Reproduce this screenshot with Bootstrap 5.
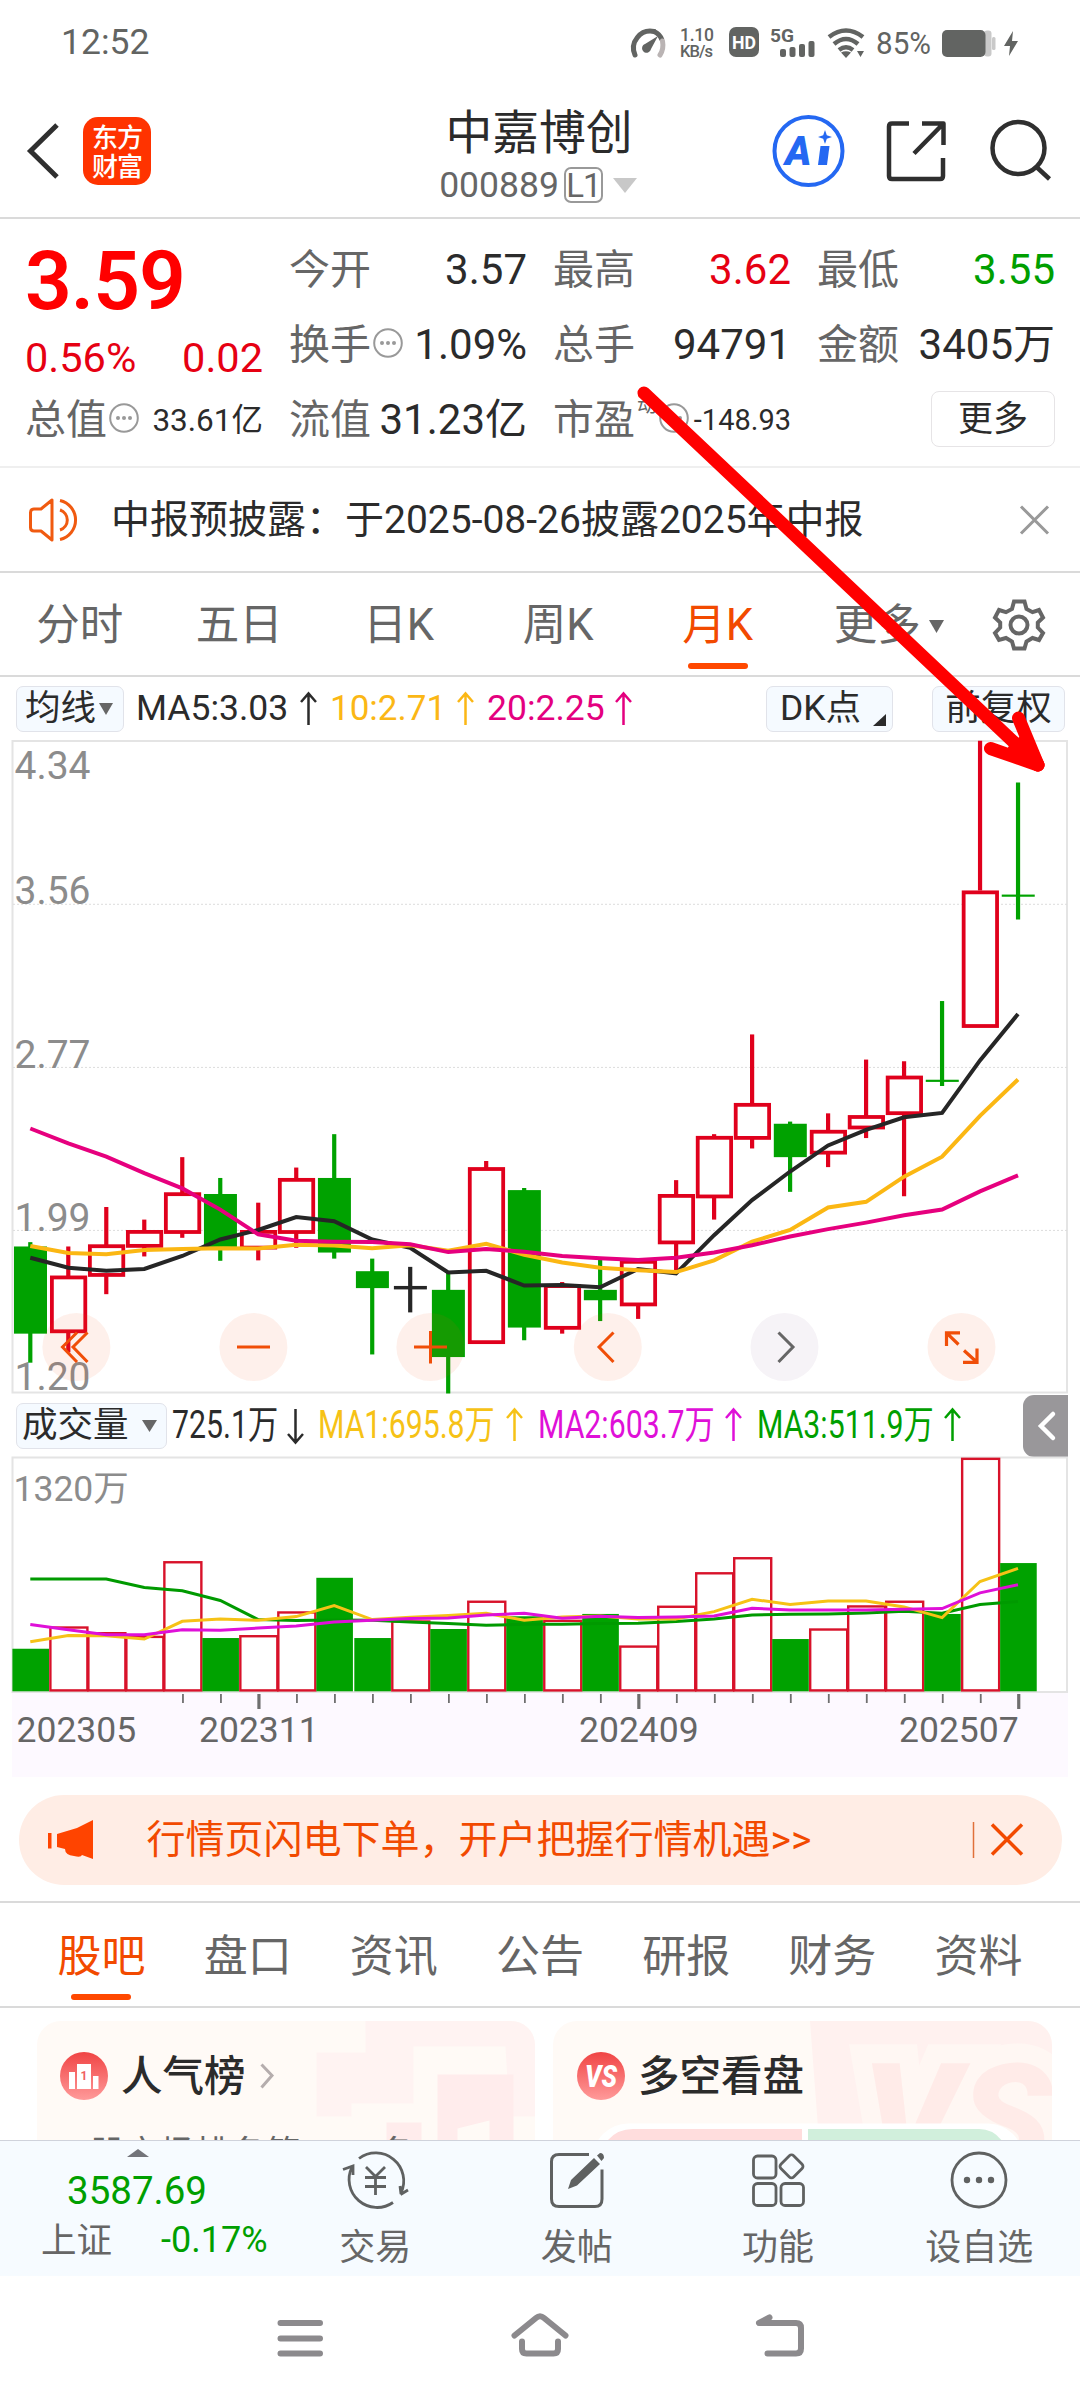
<!DOCTYPE html>
<html lang="zh-CN">
<head>
<meta charset="utf-8">
<meta name="viewport" content="width=device-width, initial-scale=1">
<title>中嘉博创 000889</title>
<link href="https://cdn.jsdelivr.net/npm/bootstrap@5.3.0/dist/css/bootstrap.min.css" rel="stylesheet">
<style>
  body{width:1080px;height:2400px;overflow:hidden;background:#fff;color:#2b2b2b;font-family:Roboto,"Noto Sans CJK SC",sans-serif;line-height:1.2}
  svg{display:block;flex:none;overflow:visible}
  .page{width:1080px;height:2400px;overflow:hidden}
  .gray{color:#666}
  .up{color:#e60012}
  .down{color:#009f00}
  .hot{color:#f24a00}
  .rule{border-bottom:2px solid #dadada}
  .bar-status{height:85px;color:#626462;padding:0 61px 0 61px}
  .bar-title{height:134px;padding-left:27px}
  .logo{width:68px;height:68px;border-radius:15px;background:#ff3300;color:#fff;font-size:26px;line-height:29px;font-weight:500;letter-spacing:-1px;font-family:"Noto Sans CJK SC",sans-serif;padding-top:4px}
  .lvl{border:2px solid #999;border-radius:7px;width:39px;height:36px;font-size:33px;line-height:33px;letter-spacing:-1px}
  .quote{height:249px;padding:14px 25px 0;display:grid;grid-template-columns:repeat(4,238px);column-gap:26px;grid-template-rows:repeat(3,75px)}
  .quote>div{display:flex;align-items:center;justify-content:space-between;white-space:nowrap;font-size:42px}
  .lab{color:#666;font-size:41px;display:flex;align-items:center}
  .quote>.last{color:#f00;font-size:82px;font-weight:600;letter-spacing:-1px;line-height:75px;padding-top:22px}
  .btn-more{width:124px;height:56px;border:1.5px solid #e6e4e6;border-radius:8px;font-size:35px;padding:0;line-height:49px;color:#2b2b2b}
  .notice{height:105px;font-size:39px;padding:0 31px 0 29px}
  .tabs-k{height:104px;font-size:43.5px;color:#666}
  .tabs-k>span{width:159.5px;height:100%;padding-top:5px}
  .uline::after{content:"";position:absolute;left:50%;margin-left:-30px;width:60px;height:6px;border-radius:3px;background:#ff4800;bottom:6px}
  .legend{height:62px;font-size:36px;padding:0 15px 0 16px;white-space:nowrap}
  .chip{height:46px;background:#f5faff;border:1.5px solid #e1e3ea;border-radius:7px;font-size:35.5px;line-height:43px}
  .tight{display:inline-block;transform:scaleX(.775);transform-origin:0 50%;font-size:39px}
  .fold{width:45px;height:62px;background:#99979a;border-radius:11px 0 0 11px}
  .promo{height:90px;margin:15px 18px 0 18.5px;background:#ffede5;border-radius:45px;font-size:39px;padding:0 38px 0 29px;color:#f24a00}
  .tabs-b{height:105px;font-size:44px;color:#666;padding:0 28.4px}
  .tabs-b>span{width:146.2px;height:100%;padding-top:5px}
  .deck{height:132px;padding:12.5px 28px 0 36.5px;gap:18.5px;overflow:hidden}
  .tile{height:160px;border-radius:24px 24px 0 0;overflow:hidden;background:#fffaf6}
  .tile h3{font-size:41.5px;font-weight:500;margin:0;color:#2b2b2b}
  .tabbar{height:136px;background:#f6fbff;border-top:1.5px solid #d0d3dc;color:#666}
  .tabbar .it{width:201.3px;font-size:36px;padding-top:8px}
  .ann{position:absolute;left:0;top:0;pointer-events:none}
</style>
<script src="https://cdn.jsdelivr.net/npm/bootstrap@5.3.0/dist/js/bootstrap.bundle.min.js"></script>
</head>
<body>
<div class="page position-relative d-flex flex-column">

  <!-- status bar -->
  <div class="bar-status d-flex align-items-center justify-content-between flex-shrink-0">
    <span style="font-size:35.500px">12:52</span>
    <svg width="390" height="36" viewBox="630 25 390 36" fill="#626462" font-family="Roboto">
      <path d="M636 55A17 17 0 0 1 655 31.5" fill="none" stroke="#626462" stroke-width="5" stroke-linecap="round"/>
      <path d="M655 31.5Q661 34 663 40" fill="none" stroke="#626462" stroke-width="5"/>
      <path d="M663.5 41Q665 49 661 55" fill="none" stroke="#bab4b4" stroke-width="5" stroke-linecap="round"/>
      <path d="M659 36L652 49a4.500 4.500 0 1 1-6-5Z"/>
      <text x="681" y="41" font-size="17.500" font-weight="500" textLength="34">1.10</text>
      <text x="681" y="56.500" font-size="16.500" font-weight="500" textLength="33">KB/s</text>
      <rect x="730" y="27" width="30" height="30" rx="7"/>
      <text x="733" y="49" font-size="18.500" font-weight="700" fill="#fff" textLength="24" lengthAdjust="spacingAndGlyphs">HD</text>
      <text x="771" y="41.500" font-size="19" font-weight="700" textLength="24" lengthAdjust="spacingAndGlyphs">5G</text>
      <rect x="781" y="49" width="6" height="8" rx="2"/><rect x="790.500" y="47" width="6" height="10" rx="2"/><rect x="800" y="44" width="6" height="13" rx="2"/><rect x="809.500" y="41" width="6" height="16" rx="2"/>
      <g fill="none" stroke="#626462" stroke-width="4.500"><path d="M830 37Q847 24 864 37"/><path d="M835 44Q847 34 859 44"/><path d="M840 50Q847 44.500 854 50"/></g>
      <path d="M842 52.500Q847 50 852 52.500L847 58ZM858 51h7l-3.500 6z"/>
      <text x="877" y="53.500" font-size="31" textLength="55" lengthAdjust="spacingAndGlyphs">85%</text>
      <rect x="985" y="30.500" width="7.500" height="26" rx="3" fill="#c9c9c9"/><rect x="993" y="37" width="3.500" height="13" rx="1.500" fill="#c9c9c9"/>
      <rect x="943" y="30" width="43.500" height="27" rx="5"/>
      <path d="M1014 31L1005 46h6l-1 10 9-15h-6z"/>
    </svg>
  </div>

  <!-- title bar -->
  <div class="bar-title rule d-flex align-items-center flex-shrink-0">
    <svg width="33" height="60" viewBox="0 0 33 60"><path d="M30 4L3.500 30 30 56" fill="none" stroke="#2f2f2f" stroke-width="5"/></svg>
    <div class="logo text-center" style="margin-left:23px"><div>东方</div><div>财富</div></div>
    <div class="flex-grow-1 d-flex flex-column align-items-center" style="margin-left:157px;padding-top:10px">
      <div style="font-size:46.800px;line-height:58px">中嘉博创</div>
      <div class="d-flex align-items-center gray" style="font-size:35.500px;line-height:47px;margin-left:-2px">000889<span class="lvl text-center" style="margin:0 10px 0 5px">L1</span><svg width="24" height="15"><path d="M0 0h24L12 15z" fill="#c8c8c8"/></svg></div>
    </div>
    <svg width="310" height="80" viewBox="770 112 310 80" fill="none" stroke="#2f2f2f" stroke-width="4.500">
      <circle cx="808.500" cy="152" r="34" stroke="#2468f2" stroke-width="4"/>
      <text x="785" y="166" font-size="40" font-weight="900" font-family="Roboto" fill="#2468f2" stroke="none" font-style="italic">A</text>
      <path d="M820.500 147h9l-2.500 19h-9z" fill="#2468f2" stroke="none"/>
      <path d="M825 131l1.800 5.200 5.200 1.800-5.200 1.800-1.800 5.200-1.800-5.200-5.200-1.800 5.200-1.800z" fill="#2468f2" stroke="none"/>
      <path d="M909 124.500H892q-3 0-3 3V177q0 3 3 3h48q3 0 3-3V159M914 154.500L942 126M922 124.500h21.500V146" stroke-linejoin="round"/>
      <circle cx="1018.500" cy="149" r="26"/><path d="M1036.500 168l13 12"/>
    </svg>
  </div>

  <!-- quote grid -->
  <div class="quote flex-shrink-0 rule" style="border-color:#efefef">
    <div class="last">3.59</div>
    <div><span class="lab">今开</span><span>3.57</span></div>
    <div><span class="lab">最高</span><span class="up">3.62</span></div>
    <div><span class="lab">最低</span><span class="down">3.55</span></div>

    <div class="up" style="padding-top:25px;font-size:41.500px"><span>0.56%</span><span>0.02</span></div>
    <div><span class="lab">换手<svg width="32" height="34"><use href="#dots"/></svg></span><span>1.09%</span></div>
    <div><span class="lab">总手</span><span>94791</span></div>
    <div><span class="lab">金额</span><span>3405万</span></div>

    <div><span class="lab">总值<svg width="32" height="34"><use href="#dots"/></svg></span><span style="font-size:31.500px">33.61亿</span></div>
    <div><span class="lab">流值</span><span>31.23亿</span></div>
    <div><span class="lab">市盈<span style="font-size:20px;align-self:flex-start;width:22px;margin-top:-3px;padding-left:2px">动</span><svg width="32" height="34"><use href="#dots"/></svg></span><span style="font-size:29px">-148.93</span></div>
    <div style="justify-content:flex-end"><button class="btn btn-more" style="margin-top:-3px">更多</button></div>
  </div>

  <!-- notice -->
  <div class="notice rule d-flex align-items-center flex-shrink-0">
    <svg width="52" height="46" viewBox="0 0 52 46" fill="none" stroke="#f05a10" stroke-width="3"><path d="M23 3v40L12 34H5q-3.500 0-3.500-3.500v-15Q1.500 12 5 12h7Z" stroke-linejoin="round"/><path d="M31 13a10.500 10.500 0 0 1 0 20M31 3.500a20 20 0 0 1 0 39"/></svg>
    <span class="flex-grow-1" style="margin-left:30px;padding-top:1px">中报预披露：于2025-08-26披露2025年中报</span>
    <svg width="29" height="28"><path d="M1 0.500L28 27.500M28 0.500L1 27.500" stroke="#999" stroke-width="3"/></svg>
  </div>

  <!-- period tabs -->
  <div class="tabs-k rule d-flex align-items-center flex-shrink-0">
    <span class="d-flex align-items-center justify-content-center">分时</span>
    <span class="d-flex align-items-center justify-content-center">五日</span>
    <span class="d-flex align-items-center justify-content-center">日K</span>
    <span class="d-flex align-items-center justify-content-center">周K</span>
    <span class="d-flex align-items-center justify-content-center hot position-relative uline">月K</span>
    <span class="d-flex align-items-center justify-content-center" style="padding-left:23px">更多<svg width="15" height="13" style="margin-left:8px"><path d="M0 0h15L7.500 13z" fill="#666"/></svg></span>
    <svg class="mx-auto" width="54" height="54" viewBox="-27 -28 54 54" fill="none" stroke="#666" stroke-width="4"><circle r="8.500"/><path d="M-5 -23.500H5.500L7.500 -16 13.500 -12.800 20 -15 24 -7.500 18.800 -2.500V2.500L24 8 20 15 13.500 13 7.500 16.500 5.500 23.500H-5L-7 16.500 -13 13 -20 15 -24 8 -18.800 2.500V-2.500L-24 -7.500 -20 -15 -13 -12.800 -7 -16Z"/></svg>
  </div>

  <!-- moving-average legend -->
  <div class="legend d-flex align-items-center flex-shrink-0" style="padding-top:1px">
    <span class="chip d-flex align-items-center" style="width:108px;padding-left:8px">均线<svg width="14" height="12" style="margin-left:3px"><path d="M0 0h14L7 12z" fill="#666"/></svg></span>
    <span style="width:164px;margin-left:12px;font-size:35.500px">MA5:3.03</span><svg width="17" height="33" stroke="#2b2b2b"><use href="#au"/></svg>
    <span style="width:127px;margin-left:13px;font-size:35px;color:#fbb715">10:2.71</span><svg width="17" height="33" stroke="#fbb715"><use href="#au"/></svg>
    <span style="width:128px;margin-left:13px;font-size:35.500px;color:#e4007f">20:2.25</span><svg width="17" height="33" stroke="#e4007f"><use href="#au"/></svg>
    <span class="chip ms-auto position-relative" style="width:127px;padding-left:13px">DK点<svg class="position-absolute" style="right:6px;bottom:5px" width="13" height="12"><path d="M13 0v12H0z" fill="#2b2b2b"/></svg></span>
    <span class="chip text-center" style="width:133px;margin-left:39px">前复权</span>
  </div>

  <!-- candlestick chart -->
  <svg id="kline" class="flex-shrink-0" width="1080" height="655" viewBox="0 739 1080 655" font-family="Roboto"></svg>

  <!-- volume legend -->
  <div class="legend d-flex align-items-center flex-shrink-0" style="padding-right:12px;height:63px">
    <span class="chip d-flex align-items-center" style="width:151px;padding-left:5px">成交量<svg width="15" height="12" style="margin-left:13px"><path d="M0 0h15L7.500 12z" fill="#666"/></svg></span>
    <span style="width:120px;padding-left:5px"><span class="tight">725.1万</span></span><svg width="17" height="36" stroke="#2b2b2b"><use href="#ad"/></svg>
    <span style="width:202px;padding-left:14px;color:#f6c216"><span class="tight">MA1:695.8万</span></span><svg width="17" height="36" stroke="#f6c216"><use href="#au"/></svg>
    <span style="width:202px;padding-left:15px;color:#df10d8"><span class="tight">MA2:603.7万</span></span><svg width="17" height="36" stroke="#df10d8"><use href="#au"/></svg>
    <span style="width:202px;padding-left:15px;color:#009f00"><span class="tight">MA3:511.9万</span></span><svg width="17" height="36" stroke="#009f00"><use href="#au"/></svg>
    <span class="fold ms-auto d-flex align-items-center justify-content-center"><svg width="18" height="30"><path d="M16 3L4 15 16 27" fill="none" stroke="#fff" stroke-width="4.500" stroke-linecap="round"/></svg></span>
  </div>

  <!-- volume chart -->
  <svg id="vol" class="flex-shrink-0" width="1080" height="323" viewBox="0 1457 1080 323" font-family='Roboto,"Noto Sans CJK SC",sans-serif'></svg>

  <!-- promo -->
  <div class="promo d-flex align-items-center flex-shrink-0">
    <svg width="46" height="40" viewBox="48 1820 46 40" fill="#ff4400"><path d="M48 1833h3.500v15.500H48zM57 1834l20-6 16-8v39l-11-4q-1 3-8 1-9-1-9-7l-8-2z"/></svg>
    <span class="flex-grow-1" style="margin-left:53px">行情页闪电下单，开户把握行情机遇&gt;&gt;</span>
    <svg width="52" height="38" viewBox="973 1821 52 38"><path d="M974.500 1822v36" stroke="#e0703a" stroke-width="1.500"/><path d="M993 1824.500l30 30M1023 1824.500l-30 30" stroke="#f24a00" stroke-width="3.500"/></svg>
  </div>
  <div class="rule flex-shrink-0" style="height:18px"></div>

  <!-- content tabs -->
  <div class="tabs-b rule d-flex flex-shrink-0">
    <span class="hot d-flex align-items-center justify-content-center position-relative uline">股吧</span>
    <span class="d-flex align-items-center justify-content-center">盘口</span>
    <span class="d-flex align-items-center justify-content-center">资讯</span>
    <span class="d-flex align-items-center justify-content-center">公告</span>
    <span class="d-flex align-items-center justify-content-center">研报</span>
    <span class="d-flex align-items-center justify-content-center">财务</span>
    <span class="d-flex align-items-center justify-content-center">资料</span>
  </div>

  <!-- cards -->
  <div class="deck d-flex flex-shrink-0">
    <div class="tile position-relative" style="width:498px">
      <svg class="position-absolute top-0 start-0" width="498" height="160" viewBox="36.500 2019.500 498 160">
        <path d="M365 2019h170v96h-26l-4-70H413v57h-62v13h-35v-64h49z" fill="#fff3f2"/><path d="M437 2073h76v80h-24v-34l-32 8v25h-20zM386 2121h35v40h-35z" fill="#ffecec"/>
      </svg>
      <div class="position-relative d-flex align-items-center" style="padding:28px 0 0 23.500px;height:82px">
        <svg width="48" height="48" viewBox="-24 -24 48 48"><circle r="24" fill="url(#rg)"/><path d="M-15-4h6v17h-6zM-7-12H7v25H-7zM9 0h5.500v13H9z" fill="#fff"/><text x="-3.500" y="4" font-size="12" font-weight="700" fill="#f06060" font-family="Roboto">1</text></svg>
        <h3 style="margin-left:13px;padding-top:2px">人气榜</h3>
        <svg width="14" height="26" style="margin-left:14px"><path d="M1.500 1.500L12 12.500 1.500 24.500" fill="none" stroke="#b5adad" stroke-width="3"/></svg>
      </div>
      <div class="position-relative gray" style="font-size:35px;padding:31px 0 0 31px;white-space:nowrap">A股市场排名第<span class="hot">3500</span>名</div>
    </div>
    <div class="tile position-relative" style="width:499px">
      <svg class="position-absolute top-0 start-0" width="499" height="160" viewBox="553 2019.500 499 160">
        <path d="M810 2019.500h242v160H822z" fill="#fff1ef"/>
        <g font-family="Roboto" font-weight="900" font-style="italic" font-size="150" fill="#ffebe8" stroke="#fff7f3" stroke-width="38" paint-order="stroke"><text x="862" y="2168" textLength="190" lengthAdjust="spacingAndGlyphs">VS</text></g>
        <rect x="593" y="2122" width="430" height="70" rx="35" fill="#fff"/>
        <path d="M802 2127.500v60H593q4-60 40-60z" fill="#fdd"/><path d="M808 2127.500v60h207q-4-60-36-60z" fill="#d1efdc"/>
        <circle cx="637" cy="2166" r="26" fill="#fff"/><circle cx="971" cy="2166" r="26" fill="#fff"/>
        <g font-family="Noto Sans CJK SC" font-size="34" font-weight="500"><text x="698" y="2168" fill="#e8451a">看涨</text><text x="849" y="2168" fill="#12a85a">看跌</text></g>
      </svg>
      <div class="position-relative d-flex align-items-center" style="padding:28px 0 0 24px;height:82px">
        <svg width="48" height="48" viewBox="-24 -24 48 48"><circle r="24" fill="url(#rg)"/><text x="-16" y="11" font-size="31" font-weight="900" font-style="italic" fill="#fff" font-family="Roboto" textLength="32" lengthAdjust="spacingAndGlyphs">VS</text></svg>
        <h3 style="margin-left:13px;padding-top:2px">多空看盘</h3>
      </div>
    </div>
  </div>

  <!-- bottom tab bar -->
  <div class="tabbar d-flex flex-shrink-0">
    <div style="width:274.700px;padding-top:8px">
      <svg width="22" height="8" style="margin-left:127px"><path d="M0 8L11 0 22 8z" fill="#73747a"/></svg>
      <div class="down" style="font-size:38.500px;line-height:50px;margin-left:67px;margin-top:9px">3587.69</div>
      <div class="d-flex align-items-center" style="margin-left:41px;height:50px"><span style="font-size:35.500px">上证</span><span class="down" style="font-size:36px;margin-left:49px">-0.17%</span></div>
    </div>
    <div class="it d-flex flex-column align-items-center">
      <svg width="68" height="62" viewBox="341 2148 68 62" fill="none" stroke="#5f6161" stroke-width="2.800"><path d="M359 2157.500A28 28 0 0 1 401 2192M401 2193l-1-8M400.500 2193.500l7.500-4.500M393 2201.500A28 28 0 0 1 352 2166M343 2168.500l10-3.500v9"/><path d="M366 2166l9.500 9.500 9.500-9.500M375.500 2175.500v18.500M365 2176.500h21M365 2185.500h21"/></svg>
      <span style="margin-top:16px">交易</span></div>
    <div class="it d-flex flex-column align-items-center">
      <svg width="68" height="62" viewBox="543 2148 68 62" fill="none" stroke="#5f6161" stroke-width="3"><path d="M589 2153.500h-30q-7.500 0-7.500 7v37.500q0 7.500 7.500 7.500h36q7 0 7-7.500V2168.500"/><path d="M568 2188l3-9 23-22 6 6-23 21.500zM597 2154.500l3-2.500q4 0 4 5l-2.500 3z" fill="#5f6161" stroke="none"/></svg>
      <span style="margin-top:16px">发帖</span></div>
    <div class="it d-flex flex-column align-items-center">
      <svg width="68" height="62" viewBox="744 2148 68 62" fill="none" stroke="#5f6161" stroke-width="2.800"><rect x="753.500" y="2155" width="22.500" height="22" rx="4"/><rect x="753.500" y="2182.500" width="22.500" height="22" rx="4"/><rect x="781" y="2182.500" width="22.500" height="22" rx="4"/><rect x="782.500" y="2156.300" width="18" height="18" rx="3" transform="rotate(45 791.500 2165.300)"/></svg>
      <span style="margin-top:16px">功能</span></div>
    <div class="it d-flex flex-column align-items-center">
      <svg width="68" height="62" viewBox="945 2148 68 62" fill="#5f6161"><circle cx="979" cy="2179" r="27" fill="none" stroke="#5f6161" stroke-width="2.800"/><circle cx="967" cy="2179" r="3.200"/><circle cx="979" cy="2179" r="3.200"/><circle cx="991" cy="2179" r="3.200"/></svg>
      <span style="margin-top:16px">设自选</span></div>
  </div>

  <!-- system navigation -->
  <svg class="flex-shrink-0" width="1080" height="123" viewBox="0 2277 1080 123" fill="none" stroke="#8c8a8d" stroke-width="6" stroke-linecap="round" stroke-linejoin="round">
    <path d="M280.500 2324h39.500M280.500 2339.500h39.500M280.500 2354.500h39.500"/>
    <path d="M514.500 2336.500L536 2319q4-3.500 8 0L565.500 2336.500M522 2342.500V2350q0 4.500 4.500 4.500h27q4.500 0 4.500-4.500v-7.500"/>
    <path d="M769.500 2318.500L759 2324h37q5 0 5 5v20.500q0 5-5 5H767.500"/>
  </svg>

  <!-- hand-drawn arrow laid over the page -->
  <svg class="ann" width="1080" height="2400" fill="none" stroke="#f00" stroke-width="13" stroke-linecap="round" stroke-linejoin="round">
    <path d="M644 393L1038 765"/><path d="M990.500 748.500L1038 765 1018.500 718"/><path d="M1014 750L1038 765 1026 740z" fill="#f00"/>
  </svg>
</div>

<svg width="0" height="0" class="position-absolute">
  <defs>
    <linearGradient id="rg" x1="0" y1="0" x2="0" y2="1"><stop offset="0" stop-color="#f04444"/><stop offset="1" stop-color="#ff9a9a"/></linearGradient>
    <g id="dots"><circle cx="17" cy="14" r="13.800" fill="none" stroke="#999" stroke-width="2"/><circle cx="11" cy="14" r="2" fill="#999"/><circle cx="17" cy="14" r="2" fill="#999"/><circle cx="23" cy="14" r="2" fill="#999"/></g>
    <g id="au" fill="none" stroke-width="2.500"><path d="M8.500 33V2M1 10L8.500 1.500 16 10"/></g>
    <g id="ad" fill="none" stroke-width="2.500"><path d="M8.500 1V34M1 26L8.500 34.500 16 26"/></g>
  </defs>
</svg>

<script>
const X = i => 30.3 + i * 37.99;
const RED = '#e0001c', GREEN = '#00a200', INK = '#262626';
const line = (pts, f, c, w) => `<polyline fill="none" stroke="${c}" stroke-width="${w}" points="${pts.map((v, i) => X(i).toFixed(1) + ',' + f(v).toFixed(1)).join(' ')}"/>`;

/* candles: direction, body top, body bottom, high, low (chart units) */
const P = v => 730 + v / 2.306;
const candles = [['g',1191,1392,1181,1459],['r',1258,1391,1191,1435],['r',1186,1261,1100,1301],['r',1153,1194,1129,1214],['r',1066,1162,985,1171],
['g',1070,1192,1033,1224],['r',1153,1198,1090,1223],['r',1033,1162,1009,1194],['g',1033,1205,932,1219],['g',1248,1287,1219,1440],
['x',1282,1290,1238,1343],['g',1291,1446,1251,1530],['r',1008,1416,994,1416],['g',1061,1378,1056,1407],['r',1278,1383,1273,1392],
['g',1291,1315,1222,1363],['r',1222,1329,1222,1358],['r',1070,1186,1038,1252],['r',936,1080,932,1129],['r',860,945,702,965],
['g',908,985,903,1065],['r',922,979,884,1008],['r',888,921,760,941],['r',797,888,764,1075],['g',806.5,811.5,625,821],['r',370,687,25,370],['g',379.5,384.5,121,437]];
const ma5 = [1217,1240,1247,1243,1213,1175,1153,1123,1133,1175,1194,1251,1247,1281,1280,1285,1243,1253,1165,1084,1018,958,922,893,883,762,655];
const ma10 = [1190,1206,1209,1199,1197,1195,1196,1187,1189,1195,1188,1201,1185,1210,1228,1240,1246,1250,1223,1180,1153,1101,1088,1030,984,890,806];
const ma20 = [919,953,984,1022,1057,1106,1163,1178,1180,1181,1186,1204,1197,1203,1213,1218,1222,1217,1205,1188,1168,1151,1136,1119,1106,1064,1027];
let k = '<rect x="12.5" y="741" width="1054.500" height="651.500" fill="none" stroke="#e4e4e4" stroke-width="2"/>';
[904.3,1067.4,1230.4].forEach(y => k += `<path d="M13 ${y}H1067" stroke="#dcdcdc" stroke-width="1" stroke-dasharray="2 2"/>`);
[['4.34',779],['3.56',904],['2.77',1068],['1.99',1231],['1.20',1390]].forEach(t => k += `<text x="14.500" y="${t[1]}" font-size="39" fill="#8c8c8c">${t[0]}</text>`);
candles.forEach((c, i) => {
  const [d, t, b, h, l] = c, x = X(i), y1 = P(t), y2 = P(b);
  const col = d === 'r' ? RED : d === 'g' ? GREEN : INK;
  k += `<path d="M${x} ${P(h)}V${P(l)}" stroke="${col}" stroke-width="4.200"/>`;
  k += d === 'r' ? `<rect x="${x - 16.4}" y="${y1 + 1.9}" width="33.400" height="${y2 - y1 - 3.8}" fill="#fff" stroke="${RED}" stroke-width="3.800"/>`
                 : `<rect x="${x - 16.3}" y="${y1}" width="33" height="${y2 - y1}" fill="${col}"/>`;
});
k += line(ma5, P, INK, 4) + line(ma10, P, '#fbb713', 4) + line(ma20, P, '#e6007e', 4);
[76.4,253.4,430.4,607.8,784.5,961.5].forEach((x, i) => k += `<circle cx="${x}" cy="1347" r="34" fill="${i === 4 ? '#f6f3f7' : 'rgba(245,80,20,.085)'}"/>`);
k += `<g fill="none" stroke="#f04e08" stroke-width="3"><path d="M77 1332.500L62.500 1347 77 1362M87.500 1332.500L73 1347 87.500 1362M237 1347h33M414 1347h33M430.500 1331v32.500"/><path d="M613.500 1332.500L599 1347 613.500 1362"/><path d="M960 1332.800H946.500V1346M946.500 1332.800L958.500 1344.500M963 1362.300H977V1348.500M977 1362.300L964 1350.500" stroke-width="3.200"/></g><path d="M778.500 1332.500L793 1347 778.500 1362" fill="none" stroke="#666" stroke-width="3"/>`;
document.getElementById('kline').innerHTML = k;

/* volume bars */
const V = v => 1380 + v / 2.988;
const vols = [['g',803],['r',736],['r',753],['r',764],['r',541],['g',771],['r',762],['r',691],['g',591],['g',771],['r',718],['g',744],['r',659],['g',706],['r',716],['g',699],['r',793],['r',674],['r',574],['r',529],['g',774],['r',742],['r',673],['r',659],['g',699],['r',232],['g',547]];
const v1 = [782,763,764,774,721,714,718,707,674,716,709,704,697,718,708,705,714,714,692,655,671,660,660,678,710,602,563];
const v2 = [731,746,761,761,746,748,741,735,723,718,713,711,702,697,712,706,710,708,705,682,687,687,687,685,683,636,612];
const v3 = [595,595,595,620,630,659,716,719,717,718,723,728,733,730,730,728,727,722,714,702,700,699,696,691,697,671,662];
let s = '<rect x="12" y="1693" width="1056" height="84" fill="#fdf9ff"/><rect x="12.500" y="1457.500" width="1054.500" height="234.500" fill="none" stroke="#e4e4e4" stroke-width="2"/>';
s += '<text x="13.500" y="1501" font-size="35.500" fill="#8c8c8c">1320万</text>';
vols.forEach((c, i) => {
  const x = X(i), y = V(c[1]);
  s += c[0] === 'r' ? `<rect x="${x - 17.9}" y="${y + 1.2}" width="37" height="${1689.2 - y}" fill="#fff" stroke="#d8122a" stroke-width="2.400"/>`
                    : `<rect x="${x - 17.9}" y="${y}" width="36.600" height="${1691.3 - y}" fill="${GREEN}"/>`;
});
s += line(v3, V, '#009a00', 3) + line(v1, V, '#f6c216', 3) + line(v2, V, '#df10d8', 3);
for (let i = 4; i < 27; i++) {
  const m = i === 6 || i === 16 || i === 26;
  s += `<path d="M${X(i) + .7} 1694V${m ? 1709 : 1703}" stroke="#6f6f6f" stroke-width="${m ? 3.2 : 1.800}"/>`;
}
[['202305',16.500],['202311',199],['202409',579],['202507',899]].forEach(t => s += `<text x="${t[1]}" y="1741.500" font-size="35.500" fill="#666">${t[0]}</text>`);
document.getElementById('vol').innerHTML = s;
</script>
</body>
</html>
